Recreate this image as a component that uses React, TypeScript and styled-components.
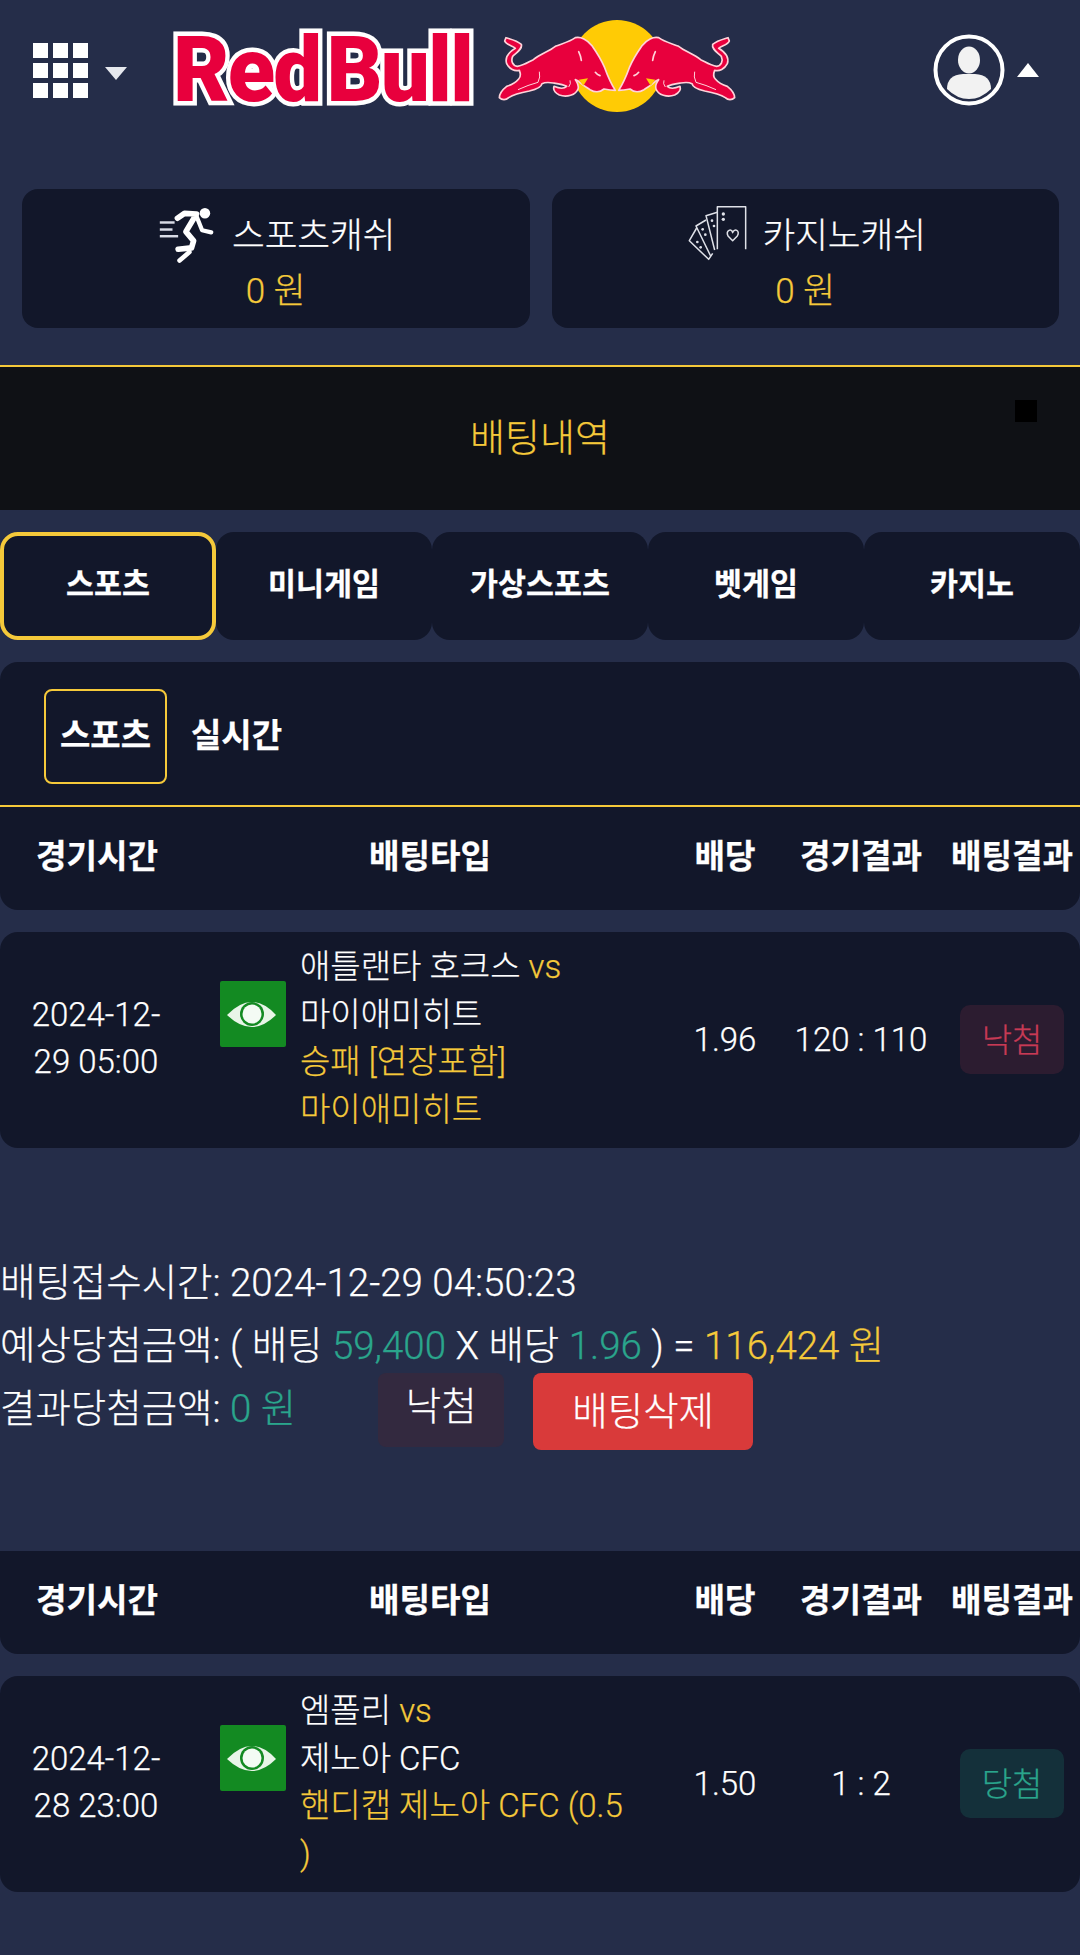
import styled, { createGlobalStyle } from "styled-components";

const gold = "#f5c93a";
const teal = "#2aa58c";
const panel = "#12172a";

const GlobalStyle = createGlobalStyle`
    html, body {
        margin: 0;
        padding: 0;
        background: #252d49;
    }
    body {
        font-family: Roboto, "Noto Sans CJK KR", sans-serif;
        color: #fff;
    }
    * {
        box-sizing: border-box;
    }
`;

const Page = styled.div`
    width: 1080px;
    height: 1955px;
    overflow: hidden;
    background: #252d49;
    font-weight: 300;
    -webkit-text-stroke: 0.25px;
`;

const Header = styled.header`
    display: flex;
    align-items: center;
    height: 140px;
    padding: 0 41px 0 33px;
`;

const GridIcon = styled.div`
    display: grid;
    grid-template-columns: repeat(3, 15px);
    grid-auto-rows: 15px;
    gap: 5px;
    i {
        background: #fff;
    }
`;

const Caret = styled.span<{ $up?: boolean }>`
    width: 0;
    height: 0;
    border-left: 11px solid transparent;
    border-right: 11px solid transparent;
    border-top: ${(p) => (p.$up ? "0" : "13px solid #e6e8ee")};
    border-bottom: ${(p) => (p.$up ? "14px solid #fff" : "0")};
`;

const MenuCaret = styled(Caret)`
    margin-left: 17px;
    margin-top: 6px;
`;

const Logotype = styled.div`
    width: 302px;
    margin-left: 46px;
    white-space: nowrap;
    transform-origin: left center;
    transform: scaleX(0.955);
    font-family: Roboto, "Liberation Sans", sans-serif;
    font-weight: 900;
    font-size: 91px;
    line-height: 90px;
    letter-spacing: -2px;
    word-spacing: -14px;
    color: #e8003d;
    -webkit-text-stroke: 9px #fff;
    paint-order: stroke fill;
`;

const BullMark = styled.svg`
    width: 242px;
    height: 100px;
    margin-left: 21px;
    margin-top: -10px;
`;

const UserArea = styled.div`
    display: flex;
    align-items: center;
    gap: 12px;
    margin-left: auto;
`;

const WalletRow = styled.section`
    display: grid;
    grid-template-columns: 1fr 1fr;
    gap: 22px;
    height: 139px;
    margin-top: 49px;
    padding: 0 21px 0 22px;
`;

const WalletCard = styled.div`
    display: flex;
    flex-direction: column;
    align-items: center;
    padding-top: 8px;
    background: ${panel};
    border-radius: 16px;
`;

const WalletTitle = styled.div`
    display: flex;
    align-items: center;
    gap: 12px;
    height: 70px;
    font-size: 35.6px;
`;

const WalletAmount = styled.div`
    margin-top: 3px;
    font-size: 35px;
    line-height: 44px;
    color: ${gold};
`;

const TitleBand = styled.section`
    position: relative;
    display: flex;
    align-items: center;
    justify-content: center;
    height: 145px;
    margin-top: 37px;
    padding-bottom: 8px;
    border-top: 2px solid ${gold};
    background: #0f1115;
    color: ${gold};
    font-size: 38px;
`;

const BlackMark = styled.span`
    position: absolute;
    top: 33px;
    right: 43px;
    width: 22px;
    height: 22px;
    background: #000;
`;

const GameTabs = styled.nav`
    display: grid;
    grid-template-columns: repeat(5, 1fr);
    height: 108px;
    margin-top: 22px;
`;

const GameTab = styled.div<{ $active?: boolean }>`
    display: flex;
    align-items: center;
    justify-content: center;
    padding-bottom: 9px;
    background: ${panel};
    border-radius: 18px;
    border: ${(p) => (p.$active ? `4px solid ${gold}` : "0")};
    font-size: 30.4px;
    font-weight: 700;
`;

const SubPanel = styled.div`
    display: flex;
    align-items: flex-start;
    gap: 24px;
    height: 145px;
    margin-top: 22px;
    padding: 27px 0 0 44px;
    background: ${panel};
    border-radius: 18px 18px 0 0;
    border-bottom: 2px solid ${gold};
`;

const SubTab = styled.div<{ $active?: boolean }>`
    display: flex;
    align-items: center;
    justify-content: center;
    width: ${(p) => (p.$active ? "123px" : "auto")};
    height: 95px;
    padding-bottom: 8px;
    border: ${(p) => (p.$active ? `2px solid ${gold}` : "0")};
    border-radius: 8px;
    font-size: 33px;
    font-weight: 700;
`;

const columns = "194px 472px 118px 154px 142px";

const TableHead = styled.div`
    display: grid;
    grid-template-columns: ${columns};
    align-items: center;
    height: 103px;
    padding-bottom: 10px;
    background: ${panel};
    border-radius: 0 0 18px 18px;
    font-size: 33.2px;
    font-weight: 700;
    text-align: center;
    white-space: nowrap;
    span:last-child {
        padding-left: 6px;
    }
`;

const BetRow = styled.div`
    display: grid;
    grid-template-columns: ${columns};
    align-items: center;
    height: 216px;
    margin-top: 22px;
    background: ${panel};
    border-radius: 18px;
    font-size: 33px;
    text-align: center;
`;

const DateCell = styled.div`
    width: 150px;
    margin: 0 auto 5px;
    padding-right: 2px;
    line-height: 47px;
`;

const TypeCell = styled.div`
    display: flex;
    align-items: flex-start;
    gap: 14px;
    height: 100%;
    padding: 11px 0 0 26px;
    text-align: left;
`;

const EyeBox = styled.svg`
    flex: none;
    width: 66px;
    height: 66px;
    margin-top: 38px;
`;

const TeamLines = styled.div`
    width: 332px;
    line-height: 47.5px;
`;

const NumberCell = styled.div`
    margin-bottom: 2px;
`;

const GoldText = styled.span`
    color: ${gold};
`;

const TealText = styled.span`
    color: ${teal};
`;

const ResultBadge = styled.div<{ $win?: boolean }>`
    display: flex;
    align-items: center;
    justify-content: center;
    width: 104px;
    height: 69px;
    margin: -2px 0 0 22px;
    padding-bottom: 2px;
    border-radius: 10px;
    background: ${(p) => (p.$win ? "#14303a" : "#2c1c30")};
    color: ${(p) => (p.$win ? teal : "#c73a55")};
`;

const InfoBlock = styled.section`
    height: 403px;
    padding-top: 103px;
    font-size: 38.5px;
`;

const InfoLine = styled.div`
    line-height: 63px;
    white-space: nowrap;
`;

const ResultLine = styled.div`
    display: flex;
    align-items: flex-start;
    margin-top: -1px;
    line-height: 66px;
    white-space: nowrap;
`;

const ActionButton = styled.div<{ $danger?: boolean }>`
    display: flex;
    align-items: center;
    justify-content: center;
    height: ${(p) => (p.$danger ? "77px" : "74px")};
    width: ${(p) => (p.$danger ? "220px" : "126px")};
    margin-top: -3px;
    margin-left: ${(p) => (p.$danger ? "29px" : "82px")};
    border-radius: 8px;
    background: ${(p) => (p.$danger ? "#d93a3a" : "#33293f")};
    padding-bottom: ${(p) => (p.$danger ? "0" : "6px")};
`;

function Bull() {
    return (
        <g>
            <path
                d="M30 68 C42 72 62 76 76 88 C80 102 62 112 50 124 C44 138 50 152 64 154 C82 152 96 142 112 134 C134 116 158 110 178 94 C198 86 222 80 238 68 C254 64 274 74 288 92 C302 112 316 134 326 158 C334 180 344 204 358 226 C346 226 334 224 324 222 C312 232 296 232 282 224 C274 218 264 214 256 206 C250 200 246 196 238 194 C244 204 250 210 246 222 C240 240 212 248 190 240 C178 234 170 226 174 214 C188 220 204 222 212 214 C202 208 186 206 172 204 C160 202 146 202 138 206 C136 218 118 224 100 228 C78 232 56 236 38 248 C30 256 18 256 10 248 C10 236 22 222 32 214 C46 210 58 204 68 192 C74 186 74 176 70 166 C56 170 40 162 32 146 C26 128 38 112 58 100 C50 92 30 90 26 78 Z"
                fill="#e8003d"
                stroke="#ffd3da"
                strokeWidth="5"
                strokeLinejoin="round"
            />
            <path d="M248 110 Q254 122 256 136" fill="none" stroke="#ffd3da" strokeWidth="5" strokeLinecap="round" />
            <path d="M298 172 Q304 180 312 182" fill="none" stroke="#ffd3da" strokeWidth="5" strokeLinecap="round" />
            <path d="M248 194 L276 190 L262 212 Z" fill="#ffcb05" />
            <path d="M130 170 Q134 186 126 202 Q96 210 66 224" fill="none" stroke="#ffd3da" strokeWidth="3" />
            <path d="M218 216 Q226 206 222 196" fill="none" stroke="#ffd3da" strokeWidth="3" />
        </g>
    );
}

function RedBullMark() {
    return (
        <BullMark viewBox="0 0 726 300">
            <circle cx="363" cy="153" r="138" fill="#ffcb05" />
            <Bull />
            <g transform="translate(726 0) scale(-1 1)">
                <Bull />
            </g>
        </BullMark>
    );
}

function UserIcon() {
    return (
        <svg width="72" height="74" viewBox="0 0 72 74">
            <circle cx="36" cy="37" r="33.5" fill="none" stroke="#fff" strokeWidth="4" />
            <ellipse cx="36" cy="27" rx="11" ry="13.5" fill="#f2f2f2" />
            <path d="M14 56 Q14 42 30 41 L42 41 Q58 42 58 56 Q48 66 36 66 Q24 66 14 56 Z" fill="#f2f2f2" />
        </svg>
    );
}

function RunnerIcon() {
    return (
        <svg width="64" height="74" viewBox="10 0 180 210">
            <circle cx="148" cy="52" r="15" fill="#fff" />
            <g fill="none" stroke="#fff" strokeLinecap="round" strokeLinejoin="round">
                <path d="M70 66 L90 52 L124 54 L94 104 L116 130 L110 150 L72 154" strokeWidth="16" />
                <path d="M124 60 L140 100 L166 106" strokeWidth="12" />
                <path d="M104 162 L76 186" strokeWidth="13" />
            </g>
            <g stroke="#d8dbe6" strokeWidth="7">
                <path d="M20 78 H62" />
                <path d="M20 98 H56" />
                <path d="M20 117 H72" />
            </g>
        </svg>
    );
}

function CardsIcon() {
    return (
        <svg width="66" height="65" viewBox="0 0 198 195">
            <g fill="none" stroke="#dfe1e8" strokeWidth="4.5" strokeLinejoin="round">
                <path d="M100 148 V20 H185 V148" />
                <path d="M100 37 L66 47 L92 150" />
                <path d="M66 60 L36 78 L80 168" />
                <path d="M38 84 L16 122 L74 178 L86 160" />
                <path d="M132 108 C124 90 144 84 146 98 C150 84 170 90 160 108 L146 122 Z" />
            </g>
            <g fill="#dfe1e8">
                <circle cx="118" cy="42" r="5" />
                <circle cx="118" cy="58" r="5" />
                <circle cx="84" cy="62" r="4" />
                <circle cx="90" cy="78" r="4" />
                <circle cx="56" cy="88" r="4" />
                <circle cx="64" cy="104" r="4" />
                <circle cx="40" cy="126" r="4" />
                <circle cx="50" cy="142" r="4" />
            </g>
        </svg>
    );
}

function EyeIcon() {
    return (
        <EyeBox viewBox="0 0 66 66">
            <rect width="66" height="66" rx="2" fill="#138a22" />
            <path d="M7 34 Q32 8 56 34 Q32 58 7 34 Z" fill="#e8f5e8" />
            <circle cx="32" cy="33" r="12" fill="#138a22" />
            <circle cx="32" cy="33" r="9.5" fill="#f4fbf4" />
        </EyeBox>
    );
}

const headings = ["경기시간", "배팅타입", "배당", "경기결과", "배팅결과"];

function TableHeading() {
    return (
        <TableHead>
            {headings.map((h) => (
                <span key={h}>{h}</span>
            ))}
        </TableHead>
    );
}

const games = ["스포츠", "미니게임", "가상스포츠", "벳게임", "카지노"];

export default function App() {
    return (
        <Page>
            <GlobalStyle />
            <Header>
                <GridIcon>
                    {Array.from({ length: 9 }, (_, i) => (
                        <i key={i} />
                    ))}
                </GridIcon>
                <MenuCaret />
                <Logotype>Red Bull</Logotype>
                <RedBullMark />
                <UserArea>
                    <UserIcon />
                    <Caret $up />
                </UserArea>
            </Header>

            <WalletRow>
                <WalletCard>
                    <WalletTitle>
                        <RunnerIcon />
                        스포츠캐쉬
                    </WalletTitle>
                    <WalletAmount>0 원</WalletAmount>
                </WalletCard>
                <WalletCard>
                    <WalletTitle>
                        <CardsIcon />
                        카지노캐쉬
                    </WalletTitle>
                    <WalletAmount>0 원</WalletAmount>
                </WalletCard>
            </WalletRow>

            <TitleBand>
                배팅내역
                <BlackMark />
            </TitleBand>

            <GameTabs>
                {games.map((g, i) => (
                    <GameTab key={g} $active={i === 0}>
                        {g}
                    </GameTab>
                ))}
            </GameTabs>

            <SubPanel>
                <SubTab $active>스포츠</SubTab>
                <SubTab>실시간</SubTab>
            </SubPanel>
            <TableHeading />

            <BetRow>
                <DateCell>2024-12-29 05:00</DateCell>
                <TypeCell>
                    <EyeIcon />
                    <TeamLines>
                        애틀랜타 호크스 <GoldText>vs</GoldText>
                        <br />
                        마이애미히트
                        <br />
                        <GoldText>승패 [연장포함]</GoldText>
                        <br />
                        <GoldText>마이애미히트</GoldText>
                    </TeamLines>
                </TypeCell>
                <NumberCell>1.96</NumberCell>
                <NumberCell>120 : 110</NumberCell>
                <ResultBadge>낙첨</ResultBadge>
            </BetRow>

            <InfoBlock>
                <InfoLine>배팅접수시간: 2024-12-29 04:50:23</InfoLine>
                <InfoLine>
                    예상당첨금액: ( 배팅 <TealText>59,400</TealText> X 배당 <TealText>1.96</TealText> ) ={" "}
                    <GoldText>116,424 원</GoldText>
                </InfoLine>
                <ResultLine>
                    결과당첨금액: <TealText>&nbsp;0 원</TealText>
                    <ActionButton>낙첨</ActionButton>
                    <ActionButton $danger>배팅삭제</ActionButton>
                </ResultLine>
            </InfoBlock>

            <TableHeading />

            <BetRow>
                <DateCell>2024-12-28 23:00</DateCell>
                <TypeCell>
                    <EyeIcon />
                    <TeamLines>
                        엠폴리 <GoldText>vs</GoldText>
                        <br />
                        제노아 CFC
                        <br />
                        <GoldText>핸디캡 제노아 CFC (0.5 )</GoldText>
                    </TeamLines>
                </TypeCell>
                <NumberCell>1.50</NumberCell>
                <NumberCell>1 : 2</NumberCell>
                <ResultBadge $win>당첨</ResultBadge>
            </BetRow>
        </Page>
    );
}
